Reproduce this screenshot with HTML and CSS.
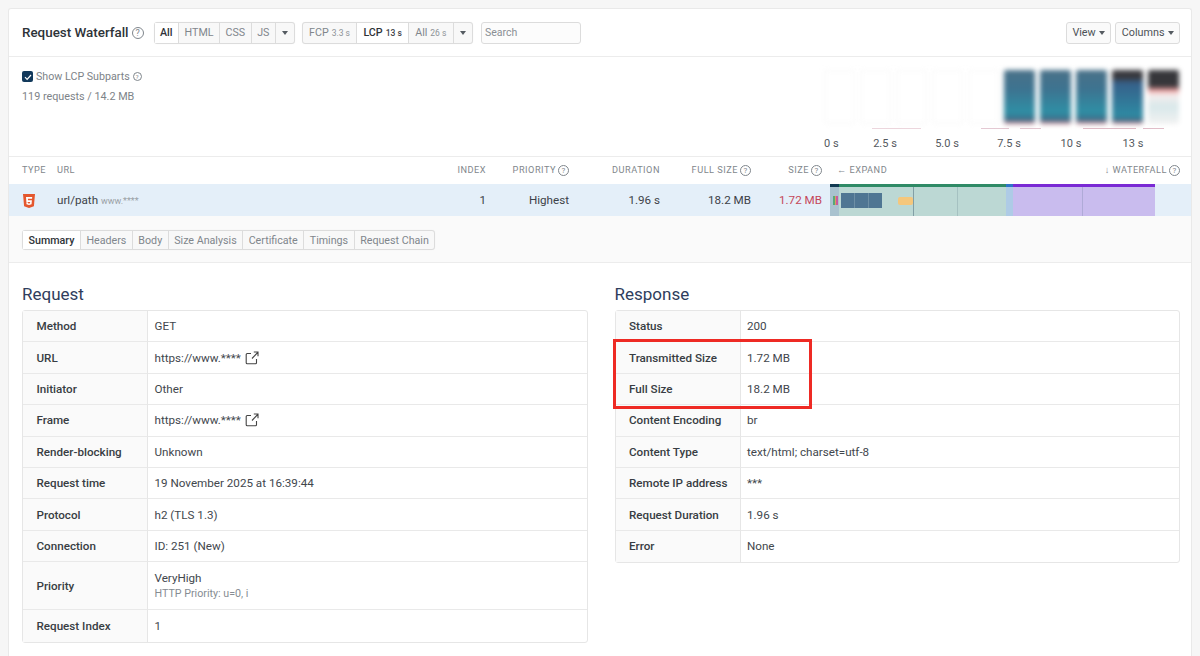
FILE: index.html
```html
<!DOCTYPE html>
<html lang="en">
<head>
<meta charset="utf-8">
<title>Request Waterfall</title>
<link rel="stylesheet" href="styles.css">
</head>
<body>
<main class="card">
  <header class="toolbar">
    <h1 class="title">Request Waterfall</h1><span class="help help-lg">?</span>
    <div class="btn-group first-group">
      <span class="seg active">All</span><span class="seg">HTML</span><span class="seg">CSS</span><span class="seg">JS</span><span class="seg caret-seg"><i class="caret"></i></span>
    </div>
    <div class="btn-group timing">
      <span class="seg">FCP <small>3.3 s</small></span><span class="seg active">LCP <small>13 s</small></span><span class="seg">All <small>26 s</small></span><span class="seg caret-seg"><i class="caret"></i></span>
    </div>
    <div class="search">Search</div>
    <div class="toolbar-right">
      <span class="single">View <i class="caret"></i></span>
      <span class="single">Columns <i class="caret"></i></span>
    </div>
  </header>

  <section class="overview">
    <div class="overview-left">
      <label class="lcp-check">
        <span class="checkbox"><svg viewBox="0 0 10 10" width="10" height="10"><path d="M2 5.2l2.1 2.1L8 3" fill="none" stroke="#fff" stroke-width="1.2"/></svg></span>
        Show LCP Subparts <span class="help help-sm">?</span>
      </label>
      <p class="summary">119 requests / 14.2 MB</p>
    </div>
    <div class="timeline">
      <div class="film">
        <div class="frame blank"></div><div class="frame blank"></div><div class="frame blank"></div><div class="frame blank"></div><div class="frame blank"></div>
        <div class="frame teal"></div><div class="frame teal"></div><div class="frame teal"></div><div class="frame teal dark-top"></div><div class="frame loaded"></div>
      </div>
      <div class="ticks"></div>
      <div class="axis"><span>0 s</span><span>2.5 s</span><span>5.0 s</span><span>7.5 s</span><span>10 s</span><span>13 s</span></div>
    </div>
  </section>

  <div class="grid-row head-row">
    <span>TYPE</span>
    <span>URL</span>
    <span class="num">INDEX</span>
    <span class="num">PRIORITY<b class="help">?</b></span>
    <span class="num">DURATION</span>
    <span class="num">FULL SIZE<b class="help">?</b></span>
    <span class="num">SIZE<b class="help">?</b></span>
    <span class="wf-head"><span><b class="arrow">&#8592;</b> EXPAND</span><span>&#8595; WATERFALL<b class="help">?</b></span></span>
  </div>

  <div class="grid-row data-row">
    <span class="type-icon">
      <svg viewBox="0 0 14 16" width="14" height="16"><path d="M1 1h12l-1.100 12.200L7 15l-4.900-1.800z" fill="#e4572e"/><path d="M4 4h6.200l-.15 1.700H5.900l.1 1.500h3.900l-.35 4L7 12l-2.500-.8-.15-1.900h1.500l.1.900 1 .3 1.100-.3.100-1.300H4.400z" fill="#fff"/></svg>
    </span>
    <span>url/path <small class="host">www.****</small></span>
    <span class="num">1</span>
    <span class="num">Highest</span>
    <span class="num">1.96 s</span>
    <span class="num">18.2 MB</span>
    <span class="num size-red">1.72 MB</span>
    <div class="bar-track">
      <div class="phase p-dns"><i class="mini"></i></div>
      <div class="phase p-wait">
        <div class="dl"><i></i><i></i><i></i></div>
        <i class="orange"></i>
        <i class="vline v1"></i><i class="vline v2"></i>
      </div>
      <div class="phase p-blue"></div>
      <div class="phase p-purple"><i class="vline v3"></i></div>
    </div>
  </div>

  <div class="tabs-band">
    <div class="btn-group tabs">
      <span class="seg active">Summary</span><span class="seg">Headers</span><span class="seg">Body</span><span class="seg">Size Analysis</span><span class="seg">Certificate</span><span class="seg">Timings</span><span class="seg">Request Chain</span>
    </div>
  </div>

  <div class="details">
    <section class="panel">
      <h2>Request</h2>
      <div class="kv">
        <div class="k">Method</div><div class="v">GET</div>
        <div class="k">URL</div><div class="v">https://www.**** <svg class="ext" viewBox="0 0 14 14" width="14" height="14"><path d="M6 2.500H2.200q-1 0-1 1v8.300q0 1 1 1h8.300q1 0 1-1V8M7 7.500l5.800-6.200M8.800 1h4.200v4.200" fill="none" stroke="#444" stroke-width="1.100"/></svg></div>
        <div class="k">Initiator</div><div class="v">Other</div>
        <div class="k">Frame</div><div class="v">https://www.**** <svg class="ext" viewBox="0 0 14 14" width="14" height="14"><path d="M6 2.500H2.200q-1 0-1 1v8.300q0 1 1 1h8.300q1 0 1-1V8M7 7.500l5.800-6.200M8.800 1h4.200v4.200" fill="none" stroke="#444" stroke-width="1.100"/></svg></div>
        <div class="k">Render-blocking</div><div class="v">Unknown</div>
        <div class="k">Request time</div><div class="v">19 November 2025 at 16:39:44</div>
        <div class="k">Protocol</div><div class="v">h2 (TLS 1.3)</div>
        <div class="k">Connection</div><div class="v">ID: 251 (New)</div>
        <div class="k tall">Priority</div><div class="v tall"><span>VeryHigh</span><small>HTTP Priority: u=0, i</small></div>
        <div class="k">Request Index</div><div class="v">1</div>
      </div>
    </section>
    <section class="panel">
      <h2>Response</h2>
      <div class="kv-wrap">
        <div class="kv">
          <div class="k">Status</div><div class="v">200</div>
          <div class="k">Transmitted Size</div><div class="v">1.72 MB</div>
          <div class="k">Full Size</div><div class="v">18.2 MB</div>
          <div class="k">Content Encoding</div><div class="v">br</div>
          <div class="k">Content Type</div><div class="v">text/html; charset=utf-8</div>
          <div class="k">Remote IP address</div><div class="v">***</div>
          <div class="k">Request Duration</div><div class="v">1.96 s</div>
          <div class="k">Error</div><div class="v">None</div>
        </div>
        <div class="highlight"></div>
      </div>
    </section>
  </div>
</main>
</body>
</html>
```
FILE: styles.css
```css
* { box-sizing: border-box; }
html, body { margin: 0; height: 656px; overflow: hidden; }
body {
  background: #f6f6f6;
  padding: 8px 8px 0;
  font-family: Roboto, "Liberation Sans", sans-serif;
  font-size: 11.650px;
  color: #3a3f45;
}
.card {
  background: #fff;
  border: 1px solid #e9e9e9;
  border-bottom: 0;
  border-radius: 3px 3px 0 0;
  height: 660px;
}
.toolbar {
  display: flex;
  align-items: center;
  height: 48px;
  padding: 0 11px 0 13px;
  border-bottom: 1px solid #ececec;
}
.title { margin: 0; font-size: 13.400px; font-weight: 500; color: #2e3338; }
.help {
  display: inline-flex;
  align-items: center;
  justify-content: center;
  width: 11px;
  height: 11px;
  margin-left: 3px;
  border: 1px solid #7f868c;
  border-radius: 50%;
  font-size: 8px;
  font-weight: 400;
  color: #7f868c;
  letter-spacing: 0;
}
.help-lg { width: 12px; height: 12px; font-size: 9px; }
.help-sm { width: 9px; height: 9px; font-size: 6px; margin-left: 0; }
.btn-group {
  display: inline-flex;
  height: 22px;
  border: 1px solid #dcdcdc;
  border-radius: 3px;
  background: #f8f8f8;
  box-shadow: 0 0 1px rgba(0,0,0,.08);
}
.first-group { margin-left: 10px; }
.btn-group + .btn-group { margin-left: 7px; }
.seg {
  display: flex;
  align-items: center;
  gap: 3px;
  padding: 0 5.500px;
  border-left: 1px solid #dcdcdc;
  font-size: 10.700px;
  color: #80868c;
  white-space: nowrap;
}
.seg:first-child { border-left: 0; }
.seg.active { color: #2e3338; background: #fff; font-weight: 500; }
.seg small { font-size: 8.500px; color: #8d9297; }
.seg.active small { color: #3f444a; }
.timing .seg { padding: 0 6.200px; }
.caret-seg { padding: 0 6px; }
.caret {
  display: inline-block;
  width: 0;
  height: 0;
  border-left: 3.500px solid transparent;
  border-right: 3.500px solid transparent;
  border-top: 4px solid #555b61;
}
.search {
  width: 100px;
  height: 22px;
  margin-left: 8px;
  padding: 0 3px;
  border: 1px solid #dcdcdc;
  border-radius: 3px;
  font-size: 10.500px;
  line-height: 20px;
  color: #8a8f94;
  background: #fcfcfc;
}
.toolbar-right { display: flex; gap: 4px; margin-left: auto; }
.single {
  display: flex;
  align-items: center;
  gap: 3px;
  height: 22px;
  padding: 0 5.500px;
  border: 1px solid #dcdcdc;
  border-radius: 3px;
  background: #fafafa;
  font-size: 10.800px;
  color: #4d5257;
}
.overview {
  display: flex;
  justify-content: space-between;
  height: 100px;
  padding: 13px 11px 0 13px;
  border-bottom: 1px solid #ececec;
}
.lcp-check { display: flex; align-items: center; gap: 3px; font-size: 10.700px; color: #7d8388; }
.checkbox {
  display: inline-flex;
  align-items: center;
  justify-content: center;
  width: 11px;
  height: 11px;
  border-radius: 2px;
  background: #12395b;
}
.summary { margin: 7px 0 0; font-size: 10.800px; color: #7d8388; }
.timeline { width: 360px; margin-top: -1px; }
.film { display: flex; gap: 5px; height: 56px; padding-left: 4px; }
.frame { width: 31px; height: 54px; margin-top: 1px; border-radius: 2px; filter: blur(2.500px); }
.blank { border: 1px solid #f4f4f4; background: #fff; }
.teal { background: linear-gradient(#4a7188 0%, #3d7390 35%, #2f8fa5 78%, #3b6f8a 92%, #d9818b 100%); }
.dark-top { background: linear-gradient(#38383d 0%, #38383d 14%, #36608a 24%, #2e8aa3 84%, #3b6f8a 93%, #d9818b 100%); }
.loaded { background: linear-gradient(#36363a 0%, #36363a 30%, #ee9a9a 37%, #f5eeee 46%, #d8e8ea 68%, #f2f2f2 100%); }
.ticks {
  height: 1px;
  margin: 3px 2px 0 6px;
  background: linear-gradient(90deg, transparent 0 13%, #ecd5dc 13% 27%, transparent 27% 44%, #e4c8d2 44% 52%, transparent 52% 55%, #e4c8d2 55% 61%, transparent 61% 73%, #e0bcc8 73% 88%, transparent 88% 90%, #e0bcc8 90% 96%, transparent 96%);
}
.axis {
  display: grid;
  grid-template-columns: 30px repeat(5, 62px);
  margin-top: 8px;
  padding-left: 4px;
  font-size: 11px;
  text-align: center;
  color: #54595e;
}
.axis span:first-child { text-align: left; }
.grid-row {
  display: grid;
  grid-template-columns: 35px 373px 56px 83px 91px 91px 71px 350px;
  column-gap: 0;
  align-items: center;
  padding-left: 13px;
}
.head-row { height: 27px; padding-bottom: 2px; font-size: 9.200px; letter-spacing: .5px; color: #81878c; }
.head-row .help { width: 11px; height: 11px; margin-left: 2px; }
.num { text-align: right; }
.wf-head { display: flex; justify-content: space-between; margin-left: 15px; width: 343px; }
.arrow { font-weight: 700; }
.data-row { height: 32px; background: #e4eff9; color: #3d4248; }
.type-icon { display: flex; padding-top: 1px; }
.host { font-size: 9px; color: #9aa0a5; }
.size-red { color: #c4475a; }
.bar-track { display: flex; height: 32px; width: 325px; margin-left: 8px; }
.phase { position: relative; height: 32px; border-top: 3px solid; }
.p-dns { width: 9px; background: #a9c2cf; border-color: #123a52; }
.p-wait { width: 167px; background: #bcd8d4; border-color: #2f8a66; }
.p-blue { width: 7px; background: #aecbe6; border-color: #2f74c8; }
.p-purple { width: 142px; background: #c9bcee; border-color: #7a2ad4; }
.mini {
  position: absolute;
  left: 3px;
  top: 9px;
  width: 6px;
  height: 9px;
  background: linear-gradient(90deg, #57a878 0 33%, #d9a05f 33% 50%, #c95a9f 50% 75%, #a9c2cf 75% 100%);
}
.dl { position: absolute; left: 2px; top: 6px; display: flex; width: 41px; height: 15px; }
.dl i { flex: 1; background: #4f7693; border-left: 1px solid #6d8fa5; }
.dl i:first-child { border-left: 0; }
.orange { position: absolute; left: 59px; top: 10px; width: 15px; height: 8px; border-radius: 2px; background: #f5c77c; }
.vline { position: absolute; top: 0; bottom: 0; width: 1px; background: rgba(60,90,110,.18); }
.v1 { left: 74px; background: rgba(60,90,110,.45); }
.v2 { left: 118px; }
.v3 { left: 69px; }
.tabs-band { height: 47px; padding: 14px 13px 0; background: #fafafa; border-bottom: 1px solid #ececec; }
.tabs { height: 20px; }
.details { display: grid; grid-template-columns: 566px 565.500px; column-gap: 26.500px; padding: 21px 13px 0; }
.panel h2 { margin: 0 0 6px; font-size: 17px; font-weight: 400; line-height: 20px; color: #2f3d5c; }
.kv {
  display: grid;
  grid-template-columns: 125px 1fr;
  border: 1px solid #e6e6e6;
  border-radius: 3px;
}
.k, .v {
  display: flex;
  align-items: center;
  height: 31.400px;
  border-bottom: 1px solid #e9e9e9;
}
.k { padding-left: 13.500px; background: #fafafa; border-right: 1px solid #e6e6e6; font-weight: 500; color: #383d43; }
.v { padding-left: 6.500px; color: #42474d; gap: 4px; }
.k:nth-last-child(2), .v:last-child { border-bottom: 0; }
.k.tall, .v.tall { height: 48px; }
.v.tall { flex-direction: column; align-items: flex-start; justify-content: center; gap: 2px; }
.v.tall small { font-size: 10.700px; color: #868c92; }
.kv-wrap { position: relative; }
.highlight {
  position: absolute;
  left: -1.500px;
  top: 29px;
  width: 199px;
  height: 70px;
  border: 3.500px solid #ee2a24;
}
```
